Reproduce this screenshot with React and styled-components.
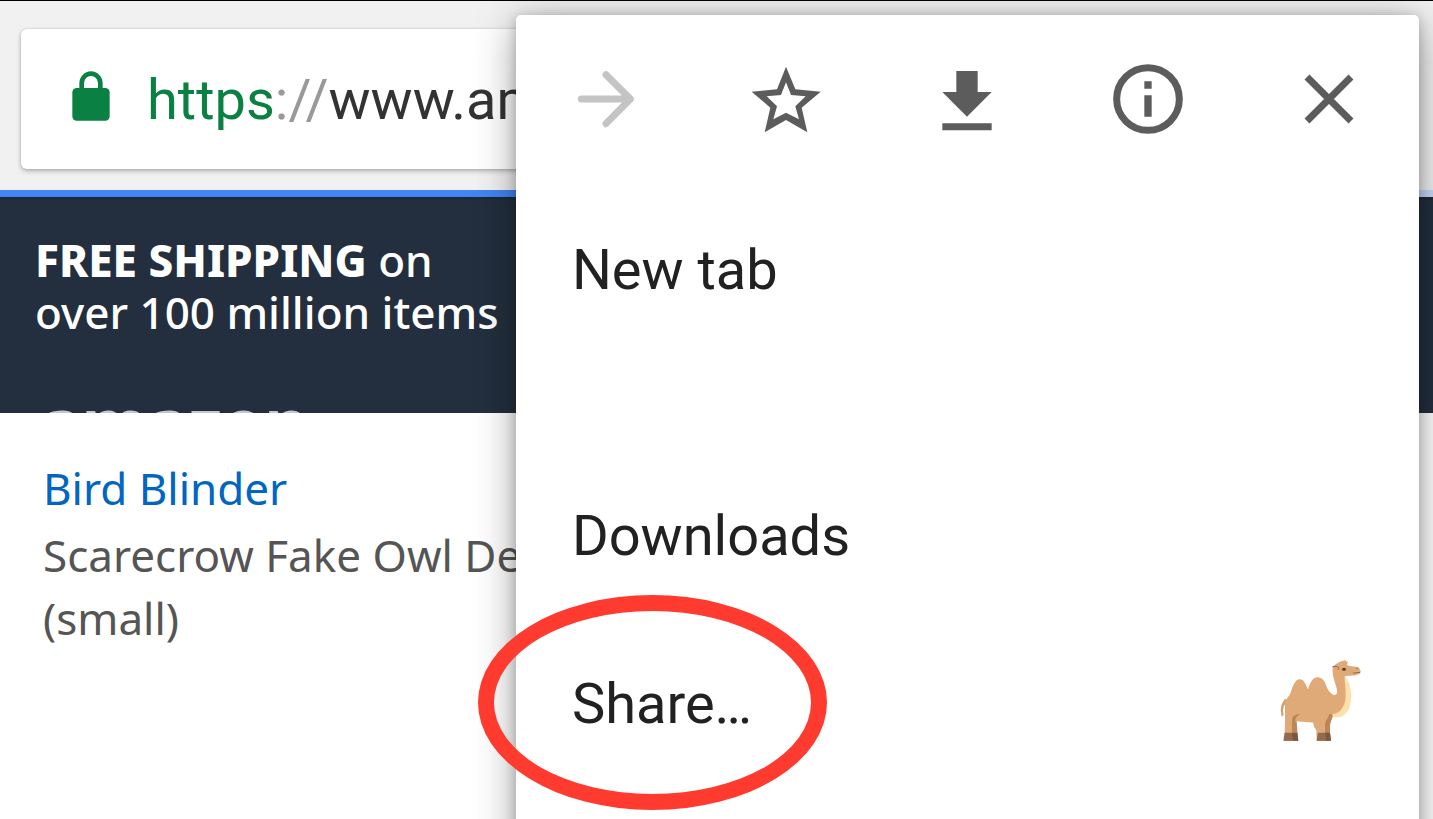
import React from 'react';
import styled, { createGlobalStyle } from 'styled-components';

const GlobalStyle = createGlobalStyle`
  * { box-sizing: border-box; }
  body { margin: 0; background: #fff; }
  button { border: 0; padding: 0; background: none; font: inherit; color: inherit; cursor: pointer; }
`;

const Screen = styled.div`
  position: relative;
  min-height: 100vh;
  overflow: hidden;
  background: #fff;
  font-family: 'Noto Sans', sans-serif;
`;

const Toolbar = styled.header`
  padding: 28px 21px 21px;
  border-top: 1px solid #000;
  background: #f1f1f1;
`;

const AddressBar = styled.button`
  display: flex;
  align-items: center;
  gap: 37px;
  width: 100%;
  height: 140px;
  && { padding: 0 51px; }
  && { background: #fff; }
  border-radius: 6px;
  box-shadow: 0 2px 5px rgba(0, 0, 0, 0.28), 0 0 2px rgba(0, 0, 0, 0.12);
  overflow: hidden;
`;

const LockIcon = styled.svg`
  flex: none;
  width: 38px;
  height: 50px;
  margin-bottom: 6px;
  fill: #0b8043;
`;

const Url = styled.span`
  padding-top: 2px;
  color: #333;
  font-family: Roboto, sans-serif;
  font-size: 56px;
  line-height: 64px;
  white-space: nowrap;
`;

const Scheme = styled.span`
  color: #0b8043;
`;

const Separator = styled.span`
  color: #999;
`;

const ProgressTrack = styled.div`
  height: 7px;
  background: #c6d9fb;
`;

const ProgressFill = styled.div`
  height: 100%;
  background: #4285f4;
`;

const Banner = styled.section`
  height: 216px;
  padding: 37px 35px 0;
  overflow: hidden;
  background: linear-gradient(#1c2632, #232f3e 4px);
  color: #fff;
`;

const Promo = styled.p`
  margin: 0;
  font-size: 44px;
  font-weight: 500;
  line-height: 52px;
`;

const Strong = styled.strong`
  font-weight: 800;
`;

const Brand = styled.div`
  margin-top: 50px;
  padding-left: 6px;
  color: #c4c7cb;
  font-size: 67px;
  font-weight: 800;
  line-height: 68px;
`;

const Product = styled.article`
  padding: 43px;
`;

const ProductLink = styled.a`
  display: block;
  color: #0066c0;
  font-size: 44px;
  line-height: 64px;
  text-decoration: none;
`;

const ProductText = styled.p`
  margin: 4px 0 0;
  color: #555;
  font-size: 44px;
  line-height: 63px;
`;

const Menu = styled.nav`
  position: absolute;
  top: 15px;
  right: 14px;
  bottom: -40px;
  left: 36%;
  border-radius: 5px;
  background: #fff;
  box-shadow: 0 8px 40px rgba(0, 0, 0, 0.38), 0 2px 12px rgba(0, 0, 0, 0.2);
  color: #212121;
  font-family: Roboto, sans-serif;
  font-size: 56px;
  line-height: 64px;
`;

const ActionRow = styled.div`
  display: flex;
  margin-bottom: 3px;
`;

const Action = styled.button`
  display: flex;
  flex: 1;
  align-items: center;
  justify-content: center;
  height: 168px;
  && { color: ${(p) => (p.disabled ? '#c4c4c4' : '#5c5c5c')}; }
`;

const ActionIcon = styled.svg`
  width: 72px;
  height: 72px;
`;

const MenuList = styled.ul`
  margin: 0;
  padding: 0;
  list-style: none;
`;

const MenuItem = styled.li`
  position: relative;
  margin-top: ${(p) => (p.$separated ? '98px' : '0')};
`;

const MenuButton = styled.button`
  display: flex;
  align-items: center;
  justify-content: space-between;
  width: 100%;
  height: 168px;
  && { padding: 0 57px 0 56px; }
`;

const CamelIcon = styled.svg`
  width: 82px;
  height: 82px;
  margin-bottom: 8px;
`;

const Highlight = styled.span`
  position: absolute;
  top: -25px;
  left: -38px;
  width: 349px;
  height: 215px;
  border: 16px solid #ff3b30;
  border-radius: 50%;
  pointer-events: none;
`;

const Lock = () => (
  <LockIcon viewBox="216 212 114 150" aria-hidden="true">
    <rect x="217" y="263" width="112" height="98" rx="13" />
    <path d="M245 268v-19a28 29 0 0 1 56 0v19" fill="none" stroke="#0b8043" strokeWidth="14" />
  </LockIcon>
);

const Forward = () => (
  <ActionIcon viewBox="30 69 216 216" fill="none" stroke="currentColor" strokeWidth="21" strokeLinecap="round" strokeLinejoin="round">
    <path d="M64 177H211M138 104l73 73-73 74" />
  </ActionIcon>
);

const Star = () => (
  <ActionIcon viewBox="573 69 216 216" fill="currentColor" fillRule="evenodd">
    <path d="M678 80 706 148 782 155 725 203 742 277 678 240 614 277 631 203 575 155 651 148ZM678 127 663 165 620 169 651 199 640 238 678 218 717 238 706 199 737 169 693 165Z" />
  </ActionIcon>
);

const Download = () => (
  <ActionIcon viewBox="33 69 216 216" fill="currentColor">
    <path d="M109 93h64v63h42l-74 74-74-74h42zM67 250h148v21H67z" />
  </ActionIcon>
);

const Info = () => (
  <ActionIcon viewBox="576 69 216 216" fill="currentColor">
    <circle cx="684" cy="177" r="94" fill="none" stroke="currentColor" strokeWidth="21" />
    <path d="M673 124h22v22h-22zM673 166h22v64h-22z" />
  </ActionIcon>
);

const Close = () => (
  <ActionIcon viewBox="39 189 216 216" fill="none" stroke="currentColor" strokeWidth="21">
    <path d="M81 231 213 363M213 231 81 363" />
  </ActionIcon>
);

const Camel = () => (
  <CamelIcon viewBox="60 58 246 246" role="img" aria-label="Camel">
    <path d="M254 108c18 20 24 58 16 90-6 25-25 37-45 35-13-1-21-7-25-15 30 4 52-25 54-64z" fill="#ffe0a8" />
    <path d="M96 205v99h19l-3-28-2-32 14-20zM194 220v84h19l-3-26v-22l8-28z" fill="#bd8659" />
    <path d="M77 176c-8 8-16 23-14 40l2 15 6-5-2-12c0-12 4-18 9-24z" fill="#d69c6b" />
    <path d="M75 188c4-13 13-18 17-29 7-21 14-40 27-40 13 0 18 15 25 30 7-20 14-36 28-36 15 0 23 12 28 29 8 17 18 24 24 24 10-1 8-13 4-27-5-16-11-32-10-49l1-8c10-13 24-18 40-21l-2 6 7-3-3 12c11 7 25 2 36 8l5 10-1 7c-14 10-33 6-47 9 0 18 3 37 3 57 0 29-14 55-39 56l-6 7c-1 11-12 14-15 26l-2 52h-25l-1-36c-5-8-9-12-9-23-17-3-31 0-46-4-10-1-14 10-16 22l-2 41H73l2-54z" fill="#e0aa78" />
    <path d="M208 222c8 2 12 1 9 10-3 10-9 14-14 26l-3 22h-5v-25c1-16 11-20 13-33zM123 225c-11 0-16 8-17 20l-1 34h-9v-37c0-12 10-20 20-18z" fill="#bd8659" />
    <path d="m74 279-4 24h28l-3-24zM174 279l-4 24h28l-3-24z" fill="#936a4b" />
    <path d="M95 279h17l3 24H98zM195 279h15l3 24h-15z" fill="#7b573f" />
    <path d="M217 82c8-4 17-1 19 2 1 4-3 7-3 7M279 100c8 1 13-3 21-1" fill="none" stroke="#966340" strokeWidth="3" />
    <ellipse cx="252" cy="89" rx="8" ry="5" fill="#ad7850" />
    <circle cx="252" cy="89" r="4" fill="#493625" />
    <circle cx="291" cy="86" r="2" fill="#795036" />
  </CamelIcon>
);

const actions = [
  { label: 'Forward', Icon: Forward, disabled: true },
  { label: 'Bookmark', Icon: Star },
  { label: 'Download page', Icon: Download },
  { label: 'Page info', Icon: Info },
  { label: 'Close menu', Icon: Close },
];

export default function App() {
  return (
    <Screen>
      <GlobalStyle />
      <Toolbar>
        <AddressBar type="button">
          <Lock />
          <Url>
            <Scheme>https</Scheme>
            <Separator>://</Separator>www.amazon.com
          </Url>
        </AddressBar>
      </Toolbar>
      <ProgressTrack role="progressbar" aria-label="Page loading" aria-valuenow={90}>
        <ProgressFill style={{ width: '90%' }} />
      </ProgressTrack>
      <main>
        <Banner>
          <Promo>
            <Strong>FREE SHIPPING</Strong> on
            <br />
            over 100 million items
          </Promo>
          <Brand>amazon</Brand>
        </Banner>
        <Product>
          <ProductLink href="#product">Bird Blinder</ProductLink>
          <ProductText>
            Scarecrow Fake Owl Decoy
            <br />
            (small)
          </ProductText>
        </Product>
      </main>
      <Menu aria-label="Browser menu">
        <ActionRow>
          {actions.map(({ label, Icon, disabled }) => (
            <Action key={label} type="button" aria-label={label} disabled={disabled}>
              <Icon />
            </Action>
          ))}
        </ActionRow>
        <MenuList>
          <MenuItem>
            <MenuButton type="button">New tab</MenuButton>
          </MenuItem>
          <MenuItem $separated>
            <MenuButton type="button">Downloads</MenuButton>
          </MenuItem>
          <MenuItem>
            <MenuButton type="button">
              Share…
              <Camel />
            </MenuButton>
            <Highlight />
          </MenuItem>
        </MenuList>
      </Menu>
    </Screen>
  );
}
